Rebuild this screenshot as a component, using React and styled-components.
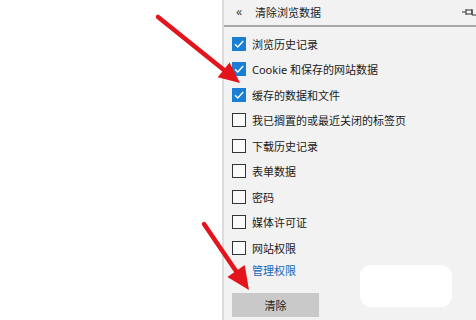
import React from 'react';
import styled, { createGlobalStyle } from 'styled-components';

const GlobalStyle = createGlobalStyle`
    html, body {
        margin: 0;
        padding: 0;
        background: #fff;
    }
    body {
        font-family: "Noto Sans", "Noto Sans CJK SC", sans-serif;
    }
`;

const Page = styled.div`
    position: relative;
    width: 476px;
    height: 320px;
    display: flex;
    overflow: hidden;
    background: #fff;
`;

const Blank = styled.div`
    width: 222px;
    flex-shrink: 0;
`;

const Panel = styled.div`
    flex: 1;
    background: #f2f2f2;
    border-left: 2px solid #dcdcdc;
    display: flex;
    flex-direction: column;
`;

const Header = styled.div`
    height: 25px;
    display: flex;
    align-items: center;
    padding-left: 12px;
    border-bottom: 2px solid #a8a8a8;
    color: #222;
    font-size: 11px;
`;

const Back = styled.span`
    width: 19px;
    font-size: 12px;
    color: #444;
    margin-top: -2px;
`;

const Title = styled.span`
    flex: 1;
    margin-top: -2px;
`;

const Pin = styled.svg`
    margin-top: -2px;
`;

const List = styled.div`
    display: flex;
    flex-direction: column;
    padding: 4px 0 0 8px;
`;

const Row = styled.label`
    height: 25.5px;
    flex-shrink: 0;
    display: flex;
    align-items: center;
    gap: 6px;
    font-size: 11px;
    color: #1a1a1a;
`;

const Box = styled.span`
    width: 14px;
    height: 14px;
    box-sizing: border-box;
    display: flex;
    align-items: center;
    justify-content: center;
    background: ${p => (p.checked ? '#1a7fd4' : '#fafafa')};
    border: ${p => (p.checked ? 'none' : '1.5px solid #333')};
`;

const Link = styled.a`
    margin: 0 0 0 20px;
    font-size: 11px;
    color: #1466b8;
    height: 20px;
    line-height: 20px;
`;

const ClearButton = styled.div`
    margin-top: 12px;
    width: 87px;
    height: 24px;
    background: #c9c9c9;
    display: flex;
    align-items: center;
    justify-content: center;
    font-size: 11px;
    color: #222;
`;

const Smudge = styled.div`
    position: absolute;
    left: 360px;
    top: 265px;
    width: 92px;
    height: 42px;
    border-radius: 11px;
    background: #fff;
`;

const Overlay = styled.svg`
    position: absolute;
    left: 0;
    top: 0;
    pointer-events: none;
`;

const items = [
    ['浏览历史记录', true],
    ['Cookie 和保存的网站数据', true],
    ['缓存的数据和文件', true],
    ['我已搁置的或最近关闭的标签页', false],
    ['下载历史记录', false],
    ['表单数据', false],
    ['密码', false],
    ['媒体许可证', false],
    ['网站权限', false],
];

const Check = () => (
    <svg width="12" height="12" viewBox="0 0 12 12">
        <path d="M2 6.2 L4.8 9 L10.2 3" fill="none" stroke="#fff" strokeWidth="1.3" />
    </svg>
);

const Arrow = ({ x1, y1, x2, y2, head = 21, half = 9.5 }) => {
    const dx = x2 - x1;
    const dy = y2 - y1;
    const len = Math.hypot(dx, dy);
    const ux = dx / len;
    const uy = dy / len;
    const bx = x2 - ux * head;
    const by = y2 - uy * head;
    const px = -uy * half;
    const py = ux * half;
    return (
        <g>
            <line x1={x1} y1={y1} x2={bx + ux * 2} y2={by + uy * 2} stroke="#e3141c" strokeWidth="4.5" strokeLinecap="round" />
            <polygon points={`${x2},${y2} ${bx + px},${by + py} ${bx - px},${by - py}`} fill="#e3141c" />
        </g>
    );
};

const App = () => {
    return (
        <Page>
            <GlobalStyle />
            <Blank />
            <Panel>
                <Header>
                    <Back>«</Back>
                    <Title>清除浏览数据</Title>
                    <Pin width="14" height="10" viewBox="0 0 14 10">
                        <path d="M0 5 H4 M4 2 V8 M4 3 H10 V7 H4 M10 2 V8 H14" fill="none" stroke="#333" strokeWidth="1" />
                    </Pin>
                </Header>
                <List>
                    {items.map(([label, checked]) => (
                        <Row key={label}>
                            <Box checked={checked}>{checked && <Check />}</Box>
                            <span>{label}</span>
                        </Row>
                    ))}
                    <Link>管理权限</Link>
                    <ClearButton>清除</ClearButton>
                </List>
            </Panel>
            <Smudge />
            <Overlay width="476" height="320">
                <Arrow x1={158} y1={17} x2={240} y2={83} />
                <Arrow x1={204} y1={224} x2={249} y2={290} head={23} half={10.5} />
            </Overlay>
        </Page>
    );
};

export default App;
